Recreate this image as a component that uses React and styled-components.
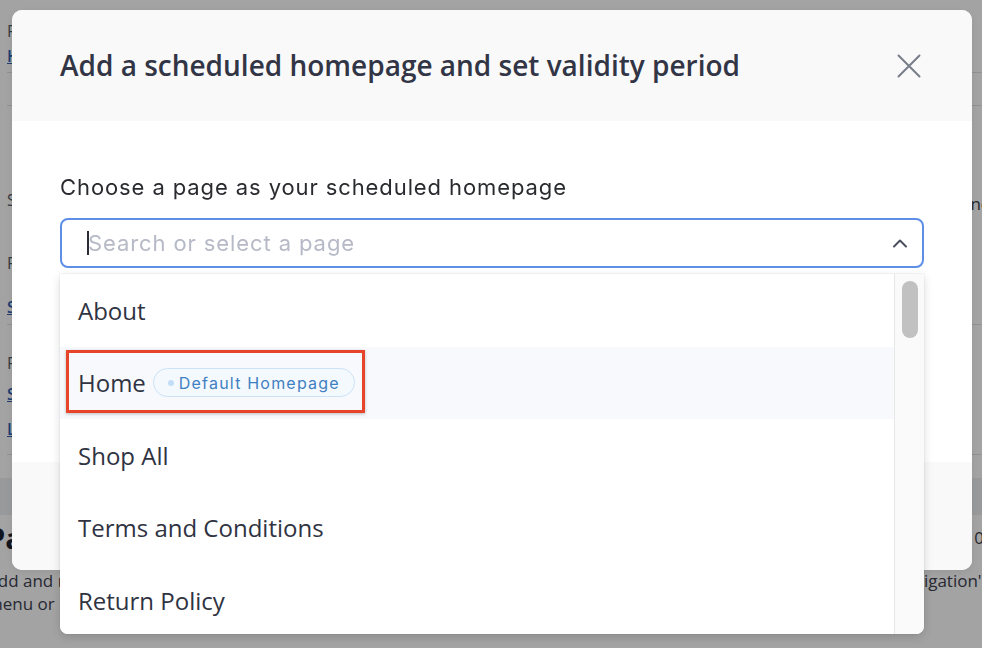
import React from "react";
import styled, { createGlobalStyle } from "styled-components";

const GlobalStyle = createGlobalStyle`
  html, body { margin: 0; padding: 0; width: 982px; height: 648px; overflow: hidden; background: #fff; }
  * { box-sizing: border-box; }
`;

/* ---------- background page (behind the overlay) ---------- */
const Page = styled.div`
  width: 982px;
  height: 648px;
  background: #fff;
  display: flex;
  flex-direction: column;
  font-family: "Open Sans", "Noto Sans", sans-serif;
  color: #444;
  overflow: hidden;
`;
const Settings = styled.div`
  height: 478px;
  flex: none;
  padding: 0 0 0 7px;
  display: flex;
  flex-direction: column;
`;
const SetRow = styled.div`
  display: flex;
  justify-content: space-between;
  align-items: flex-end;
  flex: none;
  height: ${(p) => p.$h}px;
  padding-bottom: ${(p) => p.$pb || 0}px;
  border-bottom: ${(p) => (p.$line ? "1px solid #e2e3e6" : "none")};
  font-size: 16px;
  line-height: 22px;
  color: ${(p) => (p.$link ? "#2f5fb3" : "#555a66")};
  text-decoration: ${(p) => (p.$link ? "underline" : "none")};
  font-weight: ${(p) => (p.$link ? 600 : 400)};
`;
const SideText = styled.span`
  margin-right: ${(p) => p.$mr || -10}px;
  margin-bottom: ${(p) => p.$mb || 0}px;
  color: #3a3d48;
  font-size: 17px;
  font-weight: 400;
  text-decoration: none;
`;
const Band = styled.div`
  height: 37px;
  flex: none;
  background: #eef0f3;
`;
const Section = styled.div`
  display: flex;
  flex-direction: column;
  margin-left: -13px;
`;
const SectionHead = styled.div`
  display: flex;
  justify-content: space-between;
  align-items: center;
  font-size: 29px;
  font-weight: 700;
  color: #1f2230;
  height: 44px;
`;
const SectionDesc = styled.p`
  margin: ${(p) => (p.$first ? "10px" : "0")} 0 0;
  font-size: 17px;
  line-height: 23px;
  color: #3d4150;
  white-space: nowrap;
`;

/* ---------- overlay & modal ---------- */
const Overlay = styled.div`
  position: fixed;
  inset: 0;
  background: rgba(0, 0, 0, 0.36);
`;
const Modal = styled.div`
  position: fixed;
  left: 12px;
  top: 10px;
  width: 960px;
  height: 560px;
  border-radius: 10px;
  background: #fff;
  display: flex;
  flex-direction: column;
  box-shadow: 0 2px 10px rgba(0, 0, 0, 0.08);
`;
const Header = styled.div`
  height: 111px;
  flex: none;
  background: #f9f9fa;
  border-radius: 10px 10px 0 0;
  display: flex;
  align-items: center;
  justify-content: space-between;
  padding: 0 51px 0 48px;
`;
const Title = styled.h2`
  margin: 0 0 2px;
  font-family: "Open Sans", "Noto Sans", sans-serif;
  font-weight: 600;
  font-size: 28px;
  color: #323545;
  letter-spacing: 0;
`;
const CloseButton = styled.button`
  border: 0;
  background: none;
  padding: 0;
  width: 24px;
  height: 24px;
  display: flex;
  color: #787d89;
  cursor: pointer;
`;
const Body = styled.div`
  flex: 1;
  padding: 52px 48px 0;
  display: flex;
  flex-direction: column;
`;
const Label = styled.div`
  font-family: Inter, "Liberation Sans", sans-serif;
  font-size: 22px;
  letter-spacing: 0.9px;
  line-height: 28px;
  color: #2a2b2f;
  margin-bottom: 17px;
`;
const SelectWrap = styled.div`
  position: relative;
`;
const Input = styled.div`
  height: 50px;
  border: 2px solid #5d8fe6;
  border-radius: 8px;
  display: flex;
  align-items: center;
  padding: 0 14px 0 25px;
  font-family: Inter, "Liberation Sans", sans-serif;
  font-size: 22px;
  letter-spacing: 0.9px;
`;
const Caret = styled.span`
  width: 2px;
  height: 24px;
  background: #2b2d36;
  margin-right: -1px;
  flex: none;
`;
const Placeholder = styled.span`
  color: #b6bac6;
  flex: 1;
`;
const Chevron = styled.span`
  display: flex;
  color: #4a4f5e;
`;
const Footer = styled.div`
  height: 108px;
  flex: none;
  background: #f9f9fa;
  border-radius: 0 0 10px 10px;
`;

/* ---------- dropdown ---------- */
const Menu = styled.div`
  position: absolute;
  left: 0;
  top: calc(100% + 6px);
  width: 864px;
  height: 360px;
  background: #fff;
  border-radius: 0 0 8px 8px;
  box-shadow: 0 3px 10px rgba(0, 0, 0, 0.14), 0 0 0 1px rgba(0, 0, 0, 0.03);
  display: flex;
  overflow: hidden;
`;
const Options = styled.ul`
  list-style: none;
  margin: 0;
  padding: 0;
  flex: 1;
`;
const Option = styled.li`
  position: relative;
  height: 72.5px;
  display: flex;
  align-items: center;
  gap: 7px;
  padding-left: 18px;
  font-family: "Open Sans", "Noto Sans", sans-serif;
  font-size: 24px;
  color: #2f3342;
  background: ${(p) => (p.$active ? "#f8f9fd" : "#fff")};
`;
const Badge = styled.span`
  display: inline-flex;
  align-items: center;
  gap: 5px;
  height: 29px;
  padding: 0 14px;
  border: 1px solid #cbe2f7;
  border-radius: 15px;
  background: #f4f9fe;
  font-family: Inter, "Liberation Sans", sans-serif;
  font-size: 16px;
  color: #3f80c2;
  letter-spacing: 1.2px;
`;
const Dot = styled.span`
  width: 6px;
  height: 6px;
  border-radius: 50%;
  background: #c2def6;
`;
const Highlight = styled.span`
  position: absolute;
  left: 6px;
  top: 3px;
  width: 299px;
  height: 63px;
  border: 3px solid #e6442b;
  box-shadow: 0 1px 3px rgba(0, 0, 0, 0.25);
  pointer-events: none;
`;
const Track = styled.div`
  width: 30px;
  flex: none;
  background: #fafafa;
  border-left: 1px solid #e7e7e7;
  padding-top: 7px;
  display: flex;
  justify-content: center;
`;
const Thumb = styled.div`
  width: 16px;
  height: 57px;
  border-radius: 8px;
  background: #c1c1c1;
`;

const pages = ["About", "Home", "Shop All", "Terms and Conditions", "Return Policy"];

export default function App() {
  return (
    <>
      <GlobalStyle />
      <Page>
        <Settings>
          <SetRow $h={44} $pb={2}>Featured homepage</SetRow>
          <SetRow $h={29} $pb={5} $link $line>Home</SetRow>
          <SetRow $h={33} $line />
          <SetRow $h={119} $pb={14}>
            Scheduled homepages <SideText $mr={-7} $mb={-4}>Sync</SideText>
          </SetRow>
          <SetRow $h={60} $pb={11}>From</SetRow>
          <SetRow $h={40} $pb={6} $link $line>Shop All</SetRow>
          <SetRow $h={55} $pb={6}>From</SetRow>
          <SetRow $h={30} $pb={5} $link>Summer Sale</SetRow>
          <SetRow $h={45} $pb={14} $link $line>Landing</SetRow>
        </Settings>
        <Band />
        <Section>
          <SectionHead>
            Pages <SideText $mr={-2}>0</SideText>
          </SectionHead>
          <SectionDesc $first>
            Add and manage the pages of your website. Drag and drop pages to change the order in which they appear in the 'Navigation'
          </SectionDesc>
          <SectionDesc>menu or hide pages from it.</SectionDesc>
        </Section>
      </Page>
      <Overlay />
      <Modal role="dialog" aria-label="Add a scheduled homepage and set validity period">
        <Header>
          <Title>Add a scheduled homepage and set validity period</Title>
          <CloseButton aria-label="Close">
            <svg width="24" height="24" viewBox="0 0 24 24" fill="none" stroke="currentColor" strokeWidth="2" strokeLinecap="round">
              <path d="M1.5 1.5 L22.5 22.5 M22.5 1.5 L1.5 22.5" />
            </svg>
          </CloseButton>
        </Header>
        <Body>
          <Label>Choose a page as your scheduled homepage</Label>
          <SelectWrap>
            <Input>
              <Caret />
              <Placeholder>Search or select a page</Placeholder>
              <Chevron>
                <svg width="16" height="10" viewBox="0 0 16 10" fill="none" stroke="currentColor" strokeWidth="2" strokeLinecap="round" strokeLinejoin="round">
                  <path d="M2 8.5 L8 2.5 L14 8.5" />
                </svg>
              </Chevron>
            </Input>
            <Menu>
              <Options>
                {pages.map((p) => (
                  <Option key={p} $active={p === "Home"}>
                    {p}
                    {p === "Home" && (
                      <>
                        <Badge>
                          <Dot />
                          Default Homepage
                        </Badge>
                        <Highlight />
                      </>
                    )}
                  </Option>
                ))}
              </Options>
              <Track>
                <Thumb />
              </Track>
            </Menu>
          </SelectWrap>
        </Body>
        <Footer />
      </Modal>
    </>
  );
}
